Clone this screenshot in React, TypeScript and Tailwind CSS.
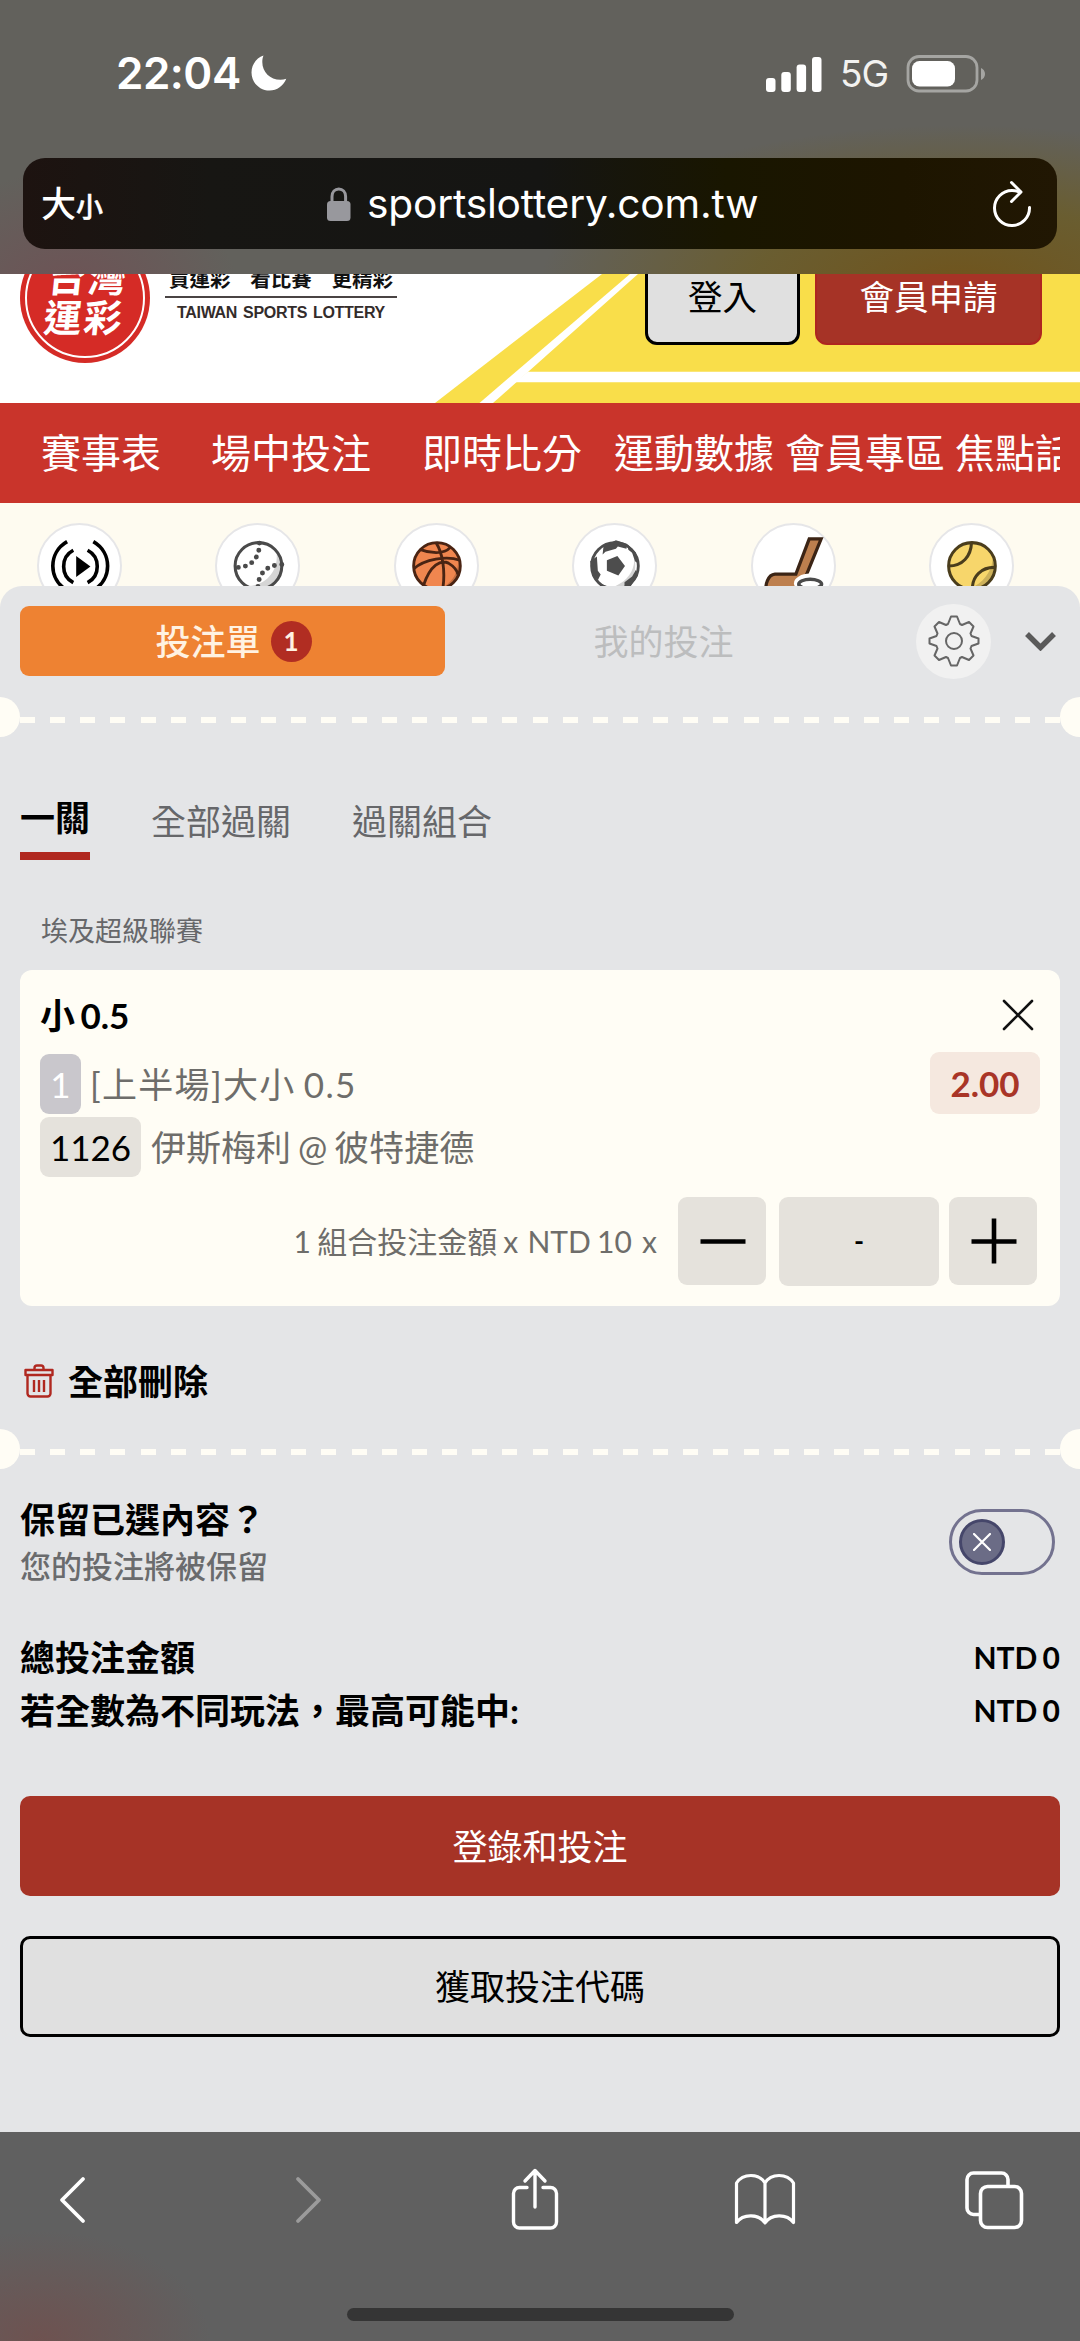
import type { ReactNode } from "react";

const navItems = [
  { label: "賽事表", w: "w-[170px]" },
  { label: "場中投注", w: "w-[211px]" },
  { label: "即時比分", w: "w-[192px]" },
  { label: "運動數據", w: "w-[171px]" },
  { label: "會員專區", w: "w-[170px]" },
  { label: "焦點話題", w: "w-[160px]" },
];

function StatusBar() {
  return (
    <div className="flex h-[158px] items-start justify-between pl-[116px] pr-[94px] pt-[54px] text-white">
      <div className="flex items-center">
        <span className="font-['Inter'] text-[44px] leading-[38px] font-semibold tracking-[-0.5px]">22:04</span>
        <svg className="ml-[10px]" width="36" height="36" viewBox="0 0 36 36" fill="#fff">
          <path d="M12.5 0.5C5 3 0.5 10 0.5 17.5 0.5 27.500 8.500 35.500 18.500 35.500 26 35.500 32.500 31 35.300 23.800 33.500 24.500 31.500 24.800 29.500 24.800 19 24.800 11.300 17 11.300 7 11.300 4.500 11.700 2.300 12.500 0.500Z" />
        </svg>
      </div>
      <div className="flex items-center">
        <svg width="56" height="36" viewBox="0 0 56 36" fill="#fff">
          <rect x="0" y="22" width="9.500" height="14" rx="3" />
          <rect x="15.300" y="16" width="9.500" height="20" rx="3" />
          <rect x="30.600" y="8.500" width="9.500" height="27.500" rx="3" />
          <rect x="46" y="1" width="9.500" height="35" rx="3" />
        </svg>
        <span className="ml-[18px] w-[49px] pt-[1px] font-['Inter'] text-[37px] leading-[38px] tracking-[-1px] text-[#f2f2f0]">5G</span>
        <svg className="ml-[17px]" width="80" height="38" viewBox="0 0 80 38">
          <rect x="2" y="1.500" width="69" height="34.500" rx="11" fill="none" stroke="#a5a5a2" strokeWidth="2.800" />
          <rect x="6" y="6" width="43" height="25.500" rx="7.500" fill="#fff" />
          <path d="M75 13v12c2.300-1 4-3.200 4-6s-1.700-5-4-6Z" fill="#a5a5a2" />
        </svg>
      </div>
    </div>
  );
}

function AddressBar() {
  return (
    <div className="mx-[23px] flex h-[91px] items-center rounded-[22px] bg-[linear-gradient(90deg,#1d1310_0%,#171613_18%,#151513_50%,#191600_68%,#1d1500_85%,#211703_100%)] text-white">
      <div className="ml-[18px] flex w-[286px] items-baseline font-['Noto_Sans_CJK_TC']">
        <span className="text-[35px] leading-[40px] font-medium">大</span>
        <span className="text-[27px] leading-[40px] font-medium [-webkit-text-stroke:0.5px]">小</span>
      </div>
      <svg width="24" height="34" viewBox="0 0 24 34">
        <rect x="0" y="14" width="23.500" height="20" rx="3.500" fill="#98989d" />
        <path d="M5 15V9.500C5 5 8 2 11.800 2s6.800 3 6.800 7.500V15" fill="none" stroke="#98989d" strokeWidth="3" />
      </svg>
      <span className="ml-[16px] w-[625px] pt-[1px] font-['Inter'] text-[40.700px] leading-[46px] tracking-[-0.2px]">sportslottery.com.tw</span>
      <svg width="42" height="48" viewBox="0 0 42 48" fill="none" stroke="#fff" strokeWidth="3" strokeLinecap="round" strokeLinejoin="round">
        <path d="M37.500 27.500A17.500 17.500 0 1 1 20 10.500c3 0 5.500.5 8 1.500" />
        <path d="M19.500 2.500l9.500 9.500-9.500 9.500" />
      </svg>
    </div>
  );
}

function BrowserTop() {
  return (
    <div className="h-[274px] shrink-0 bg-[radial-gradient(ellipse_420px_160px_at_960px_285px,#70541c_0%,rgba(108,92,34,0.75)_50%,rgba(98,98,92,0)_100%),radial-gradient(ellipse_170px_130px_at_70px_300px,rgba(112,80,84,0.9)_0%,rgba(98,97,92,0)_100%)] bg-[#62615c]">
      <StatusBar />
      <AddressBar />
    </div>
  );
}

function SiteHeader() {
  return (
    <header className="relative flex h-[129px] shrink-0 items-end overflow-hidden bg-white">
      <svg className="absolute inset-0" width="1080" height="129" viewBox="0 0 1080 129">
        <path d="M435 129L602 0H1080V129Z" fill="#f9de4a" />
        <path d="M479.500 129L630 0h8L493 129Z" fill="#fff" />
        <path d="M515 108.300L528 97.700H1080v10.600Z" fill="#fff" />
      </svg>
      <div className="relative mb-[40px] ml-[20px] flex h-[130px] w-[130px] shrink-0 items-center justify-center rounded-full bg-[#d52b26]">
        <div className="absolute inset-[5px] rounded-full border-2 border-white" />
        <div className="-skew-x-6 pb-[4px] pl-[2px] text-center font-['Noto_Sans_CJK_TC'] text-[38px] leading-[40px] font-bold tracking-[2px] text-white">
          <div>台灣</div>
          <div>運彩</div>
        </div>
      </div>
      <div className="relative mb-[81px] ml-[15px] w-[232px] shrink-0">
        <div className="flex h-[30px] items-center justify-between border-b-2 border-[#4a4444] pr-[4px] pb-[9px] pl-[4px] font-['Noto_Sans_CJK_TC'] text-[20.500px] leading-[24px] font-bold text-[#111]">
          <span>買運彩</span>
          <span>看比賽</span>
          <span>更精彩</span>
        </div>
        <div className="flex justify-between pt-[6px] pr-[12px] pl-[12px] font-['Liberation_Sans'] text-[16px] leading-[18px] font-bold tracking-[-0.300px] text-[#332c2b]">
          <span>TAIWAN</span>
          <span>SPORTS</span>
          <span>LOTTERY</span>
        </div>
      </div>
      <div className="relative mb-[58px] ml-auto flex shrink-0 gap-[15px] pr-[38px] text-[34.500px]">
        <button className="h-[95px] w-[155px] rounded-[12px] border-[3px] border-black bg-[#e0e0e0] pb-[2px] text-black">登入</button>
        <button className="h-[95px] w-[227px] rounded-[12px] border-2 border-[#ae2620] bg-[#a63326] pb-[2px] text-white">會員申請</button>
      </div>
    </header>
  );
}

function MainNav() {
  return (
    <nav className="flex h-[100px] shrink-0 items-center bg-[#c9342b] px-[20px]">
      <div className="flex overflow-hidden pl-[21px] text-[40px] leading-[60px] whitespace-nowrap text-white">
        {navItems.map((n) => (
          <span key={n.label} className={`${n.w} shrink-0`}>
            {n.label}
          </span>
        ))}
      </div>
    </nav>
  );
}

function LiveIcon() {
  return (
    <svg width="85" height="85" viewBox="0 0 85 85" fill="none" stroke="#000" strokeWidth="3.800">
      <path d="M29.500 17.500C9.500 29 9.500 57 29.500 68.500M57 17.500c20 11.500 20 39.500 0 51" />
      <path d="M36 26.500c-13.500 7-13.500 27 0 34M51 26.500c13.500 7 13.500 27 0 34" />
      <path d="M39 32.500l15 11-15 11Z" fill="#000" stroke="none" />
    </svg>
  );
}

function BaseballIcon() {
  return (
    <svg width="85" height="85" viewBox="0 0 85 85" fill="none">
      <path d="M62 26c4 18-8 39-33 38 14 10 39 2 39-20 0-8-3-14-6-18Z" fill="#d5d5d5" />
      <circle cx="43.500" cy="43" r="24.500" stroke="#4a4a4a" strokeWidth="3.200" />
      <path d="M44.500 19C45 34 36 45 20 44.500M68 41.500C52 42 43 51 43 66" stroke="#4a4a4a" strokeWidth="5.200" strokeLinecap="round" strokeDasharray="0 7.600" />
    </svg>
  );
}

function BasketballIcon() {
  return (
    <svg width="85" height="85" viewBox="0 0 85 85" fill="none">
      <circle cx="43" cy="43" r="24.500" fill="#f0864f" />
      <path d="M65 32c2 15-5 30-20 35 20 0 26-22 20-35Z" fill="#c46e40" />
      <g stroke="#4a2413" strokeWidth="3">
        <circle cx="43" cy="43" r="24.500" />
        <path d="M42 18.500c7 11 10 30 7 49M25 25.500c10 4 25 6 32-2M18.500 46C30 36 53 32 67 37M29 63C36 42 47 36 55 40c5 3 9 7 10 12" />
      </g>
    </svg>
  );
}

function SoccerIcon() {
  return (
    <svg width="85" height="85" viewBox="0 0 85 85" fill="none">
      <circle cx="43" cy="43" r="24.800" fill="#fff" />
      <path d="M62 28c5 18-6 33-24 38 18 4 32-12 24-38Z" fill="#d4d4d4" />
      <g fill="#4d4d4d">
        <path d="M31 22l13-6 12 4-1 5-9-2.500-2 2.500-11 3-3 3Z" />
        <path d="M56 20l9 9 3 12-4-3-3-9-4-3Z" />
        <path d="M17 38l7-5 1 15 3 4-3 6-6-8Z" />
        <path d="M28 62l13 4 3 2-6 1-10-4Z" />
        <path d="M65 47l2 6-8 12-6 2 0-7 8-6Z" />
        <path d="M34.500 37l11-4.500 8 10.500-7 10-12-5Z" />
      </g>
      <circle cx="43" cy="43" r="24.500" stroke="#4d4d4d" strokeWidth="3" />
    </svg>
  );
}

function HockeyIcon() {
  return (
    <svg width="85" height="85" viewBox="0 0 85 85" fill="none">
      <path d="M59 14.500h12.500L55 55 46 73H14c-2-11 2-21 9-21.500h22Z" fill="#bd7f4e" stroke="#3b2415" strokeWidth="3.400" />
      <ellipse cx="60" cy="61" rx="17" ry="10" fill="#fff" />
      <path d="M47 62v16h26V62Z" fill="#4a4a4a" />
      <ellipse cx="60" cy="62" rx="12" ry="5" fill="#fff" stroke="#4a4a4a" strokeWidth="3.600" />
    </svg>
  );
}

function TennisIcon() {
  return (
    <svg width="85" height="85" viewBox="0 0 85 85" fill="none">
      <circle cx="43" cy="43" r="24.500" fill="#f7d66b" />
      <path d="M65 31c0 18-10 30-25 36 21 1 30-18 25-36Z" fill="#cdb15a" />
      <g stroke="#4a3d1c" strokeWidth="3.200">
        <circle cx="43" cy="43" r="24.500" />
        <path d="M42.500 18.500C42 33 33 43 18.500 43M67.500 44.500C53 44 43 54 43.500 67.500" />
      </g>
    </svg>
  );
}

function SportCircle({ children }: { children: ReactNode }) {
  return <div className="flex h-[85px] w-[85px] shrink-0 items-center justify-center rounded-full border-2 border-[#e6e6e8] bg-white">{children}</div>;
}

function SportRow() {
  return (
    <div className="flex h-[83px] items-start justify-between overflow-hidden bg-[#fefbf0] pt-[20px] pr-[66px] pl-[37px]">
      <SportCircle><LiveIcon /></SportCircle>
      <SportCircle><BaseballIcon /></SportCircle>
      <SportCircle><BasketballIcon /></SportCircle>
      <SportCircle><SoccerIcon /></SportCircle>
      <SportCircle><HockeyIcon /></SportCircle>
      <SportCircle><TennisIcon /></SportCircle>
    </div>
  );
}

function TicketDivider() {
  return (
    <div className="flex h-[40px] items-center justify-between overflow-hidden">
      <div className="-ml-[20px] h-[40px] w-[40px] shrink-0 rounded-full bg-[#fffdf5]" />
      <div className="mt-[5px] h-[6px] grow bg-[repeating-linear-gradient(90deg,#fffdf5_0px,#fffdf5_15px,transparent_15px,transparent_30.150px)]" />
      <div className="-mr-[20px] h-[40px] w-[40px] shrink-0 rounded-full bg-[#fffdf5]" />
    </div>
  );
}

function GearIcon() {
  return (
    <svg width="52" height="52" viewBox="-26 -26 52 52" fill="none" stroke="#666" strokeWidth="2" strokeLinejoin="round">
      <path d="M-3-24.500H3L6-17 8-16 15-19 19.500-14.500 16.500-7.500 17.500-5 24.500-2.500V2.500L17.500 5 16.500 7.500 19.500 14.500 15 19 8 16 6 17 3 24.500H-3L-6 17-8 16-15 19-19.500 14.500-16.500 7.500-17.500 5-24.500 2.500V-2.500L-17.500-5-16.500-7.500-19.500-14.500-15-19-8-16-6-17Z" />
      <circle cx="0" cy="0" r="8" />
    </svg>
  );
}

function SlipHeader() {
  return (
    <div className="flex h-[111px] items-center pr-[24px] pb-[1px] pl-[20px]">
      <button className="flex h-[70px] w-[425px] items-center justify-center rounded-[9px] bg-[#ee8232] pl-[2px] text-[35px] font-medium text-[#fff2e2]">
        投注單
        <span className="ml-[10px] flex h-[41px] w-[41px] items-center justify-center rounded-full bg-[#b12d22] text-[26px] leading-[26px] font-bold">1</span>
      </button>
      <div className="grow text-center text-[35px] text-[#bcbdbe]">
        <span className="ml-[-34px]">我的投注</span>
      </div>
      <button className="flex h-[75px] w-[75px] items-center justify-center rounded-full bg-[#f1f1f1]">
        <GearIcon />
      </button>
      <svg className="ml-[34px]" width="31" height="20" viewBox="0 0 31 20" fill="none" stroke="#5a5a5a" strokeWidth="5.500">
        <path d="M2 3l13.500 13.500L29 3" />
      </svg>
    </div>
  );
}

function SlipTabs() {
  return (
    <div className="flex items-start pl-[20px] text-[35px] leading-[50px]">
      <div className="h-[70px] border-b-[8px] border-[#b02820] pt-[2px] font-bold text-black">一關</div>
      <div className="ml-[61px] pt-[6px] text-[#66676a]">全部過關</div>
      <div className="ml-[61px] pt-[6px] text-[#66676a]">過關組合</div>
    </div>
  );
}

function BetCard() {
  return (
    <div className="mx-[20px] h-[336px] rounded-[12px] bg-[#fffdf5] pt-[20px] pr-[20px] pl-[20px]">
      <div className="flex h-[50px] items-center justify-between">
        <div className="text-[35px] leading-[50px] font-bold text-black [word-spacing:-3px]">小 0.5</div>
        <svg className="mr-[6px]" width="32" height="32" viewBox="0 0 32 32" stroke="#111" strokeWidth="2.600" strokeLinecap="round">
          <path d="M2 2l28 28M30 2L2 30" />
        </svg>
      </div>
      <div className="mt-[12px] flex items-start justify-between">
        <div>
          <div className="mt-[2px] flex h-[60px] items-center">
            <span className="flex h-[60px] w-[41px] items-center justify-center rounded-[9px] bg-[#c9c7cc] text-[35px] text-white">1</span>
            <span className="ml-[9px] text-[35px] tracking-[1.300px] text-[#6e6d6a] [word-spacing:-2px]">[上半場]大小 0.5</span>
          </div>
          <div className="mt-[3px] flex h-[60px] items-center">
            <span className="flex h-[60px] w-[101px] items-center justify-center rounded-[9px] bg-[#e5e2dc] text-[35px] text-black">1126</span>
            <span className="ml-[10px] text-[35px] text-[#6e6d6a] [word-spacing:-2px]">伊斯梅利 @ 彼特捷德</span>
          </div>
        </div>
        <div className="flex h-[62px] w-[110px] items-center justify-center rounded-[9px] bg-[#f5e8df] text-[35px] font-bold text-[#a93527]">2.00</div>
      </div>
      <div className="mt-[20px] flex h-[88px] items-center justify-end pr-[3px]">
        <span className="mr-[21px] text-[30px] text-[#6e6d6a] [word-spacing:-1.500px]">
          1 組合投注金額 x <span className="ml-[3px]">NTD 10</span> <span className="ml-[4px]">x</span>
        </span>
        <button className="flex h-[88px] w-[88px] items-center justify-center rounded-[9px] bg-[#e5e2dc] pl-[1px]">
          <svg width="46" height="46" viewBox="0 0 46 46" stroke="#000" strokeWidth="4.600"><path d="M.5 23.500h45" /></svg>
        </button>
        <div className="mr-[10px] ml-[13px] flex h-[89px] w-[160px] items-center justify-center rounded-[9px] bg-[#e5e2dc] text-[27px] font-bold text-black">-</div>
        <button className="flex h-[88px] w-[88px] items-center justify-center rounded-[9px] bg-[#e5e2dc] pl-[2px]">
          <svg width="46" height="46" viewBox="0 0 46 46" stroke="#000" strokeWidth="4.600"><path d="M.5 23.500h45M23 .5v45" /></svg>
        </button>
      </div>
    </div>
  );
}

function TrashIcon() {
  return (
    <svg width="30" height="34" viewBox="0 0 30 34" fill="none" stroke="#b02820" strokeWidth="2.400" strokeLinejoin="round">
      <path d="M1.500 6h27v5h-27ZM3.500 11v18.500a3 3 0 0 0 3 3h17a3 3 0 0 0 3-3V11M10.500 6V4a2.500 2.500 0 0 1 2.500-2.500h4A2.500 2.500 0 0 1 19.500 4v2M10 16v12M15 16v12M20 16v12" />
    </svg>
  );
}

function KeepToggle() {
  return (
    <div className="flex h-[66px] w-[106px] items-center rounded-full border-[3px] border-[#73728f] pl-[7px]">
      <div className="flex h-[46px] w-[46px] items-center justify-center rounded-full border-[3px] border-[#45466a] bg-[#6b6c86]">
        <svg width="18" height="18" viewBox="0 0 18 18" stroke="#fff" strokeWidth="2.200" strokeLinecap="round">
          <path d="M1 1l16 16M17 1L1 17" />
        </svg>
      </div>
    </div>
  );
}

function BetSlip() {
  return (
    <div className="h-[1546px] rounded-t-[22px] bg-[#e4e5e7]">
      <SlipHeader />
      <TicketDivider />
      <div className="mt-[53px]">
        <SlipTabs />
      </div>
      <div className="mt-[51px] h-[59px] pl-[41px] text-[27px] leading-[40px] text-[#66676a]">埃及超級聯賽</div>
      <BetCard />
      <button className="mt-[50px] mb-[23px] flex h-[50px] items-center pl-[24px] text-[35px] leading-[50px] font-bold text-black">
        <TrashIcon />
        <span className="ml-[14px]">全部刪除</span>
      </button>
      <TicketDivider />
      <div className="mt-[26px] flex h-[94px] items-center justify-between pr-[25px] pl-[20px]">
        <div>
          <div className="text-[35px] leading-[48px] font-bold text-black">保留已選內容？</div>
          <div className="text-[31px] leading-[46px] font-medium text-[#6a6b6d]">您的投注將被保留</div>
        </div>
        <KeepToggle />
      </div>
      <div className="mt-[42px] px-[20px] text-[35px] leading-[53px] font-bold text-black">
        <div className="flex justify-between">
          <span>總投注金額</span>
          <span className="text-[30px] [word-spacing:-2px]">NTD 0</span>
        </div>
        <div className="flex justify-between">
          <span>若全數為不同玩法，最高可能中:</span>
          <span className="text-[30px] [word-spacing:-2px]">NTD 0</span>
        </div>
      </div>
      <button className="mx-[20px] mt-[59px] block h-[100px] w-[1040px] rounded-[10px] bg-[#a63326] text-[35px] text-white">登錄和投注</button>
      <button className="mx-[20px] mt-[40px] block h-[101px] w-[1040px] rounded-[10px] border-[3px] border-black bg-[#e0e0e0] text-[35px] text-black">獲取投注代碼</button>
    </div>
  );
}

function BrowserBottom() {
  return (
    <div className="flex h-[209px] shrink-0 flex-col items-center bg-[radial-gradient(ellipse_170px_110px_at_40px_100%,#6e5250_0%,rgba(96,96,96,0)_100%)] bg-[#606060]">
      <div className="mt-[36px] flex h-[64px] w-full items-center pl-[58px]">
        <svg width="30" height="50" viewBox="0 0 30 50" fill="none" stroke="#fff" strokeWidth="3.800" strokeLinecap="round" strokeLinejoin="round">
          <path d="M25 4L4 25l21 21" />
        </svg>
        <svg className="ml-[205px]" width="30" height="50" viewBox="0 0 30 50" fill="none" stroke="#9b9b9b" strokeWidth="3.800" strokeLinecap="round" strokeLinejoin="round">
          <path d="M5 4l21 21L5 46" />
        </svg>
        <svg className="ml-[187px]" width="50" height="64" viewBox="0 0 50 64" fill="none" stroke="#fff" strokeWidth="3.400" strokeLinecap="round" strokeLinejoin="round">
          <path d="M17 19.500H9.500A6 6 0 0 0 3.500 25.500V54a6 6 0 0 0 6 6h31a6 6 0 0 0 6-6V25.500a6 6 0 0 0-6-6H33M25 39V3M15 13L25 2.500 35 13" />
        </svg>
        <svg className="ml-[174px]" width="62" height="56" viewBox="0 0 62 56" fill="none" stroke="#fff" strokeWidth="3.200" strokeLinejoin="round">
          <path d="M31 11C25 1 9 1 2.500 11v39.500C9 41.500 25 41.500 31 51c6-9.500 22-9.500 28.500-.5V11C53 1 37 1 31 11ZM31 11v40" />
        </svg>
        <svg className="ml-[168px]" width="60" height="60" viewBox="0 0 60 60" fill="none" stroke="#fff" strokeWidth="3.600">
          <rect x="16.500" y="16.500" width="41" height="41" rx="7" />
          <path d="M44 16V9.500A6.500 6.500 0 0 0 37.500 3h-28A6.500 6.500 0 0 0 3 9.500V38a6.500 6.500 0 0 0 6.500 6.500H16" />
        </svg>
      </div>
      <div className="mt-[76px] h-[13px] w-[387px] rounded-full bg-[#353535]" />
    </div>
  );
}

export default function App() {
  return (
    <div className="flex h-[2341px] w-[1080px] flex-col overflow-hidden bg-[#fefbf0] font-['Lato','Noto_Sans_CJK_TC',sans-serif]">
      <BrowserTop />
      <SiteHeader />
      <MainNav />
      <SportRow />
      <BetSlip />
      <BrowserBottom />
    </div>
  );
}
